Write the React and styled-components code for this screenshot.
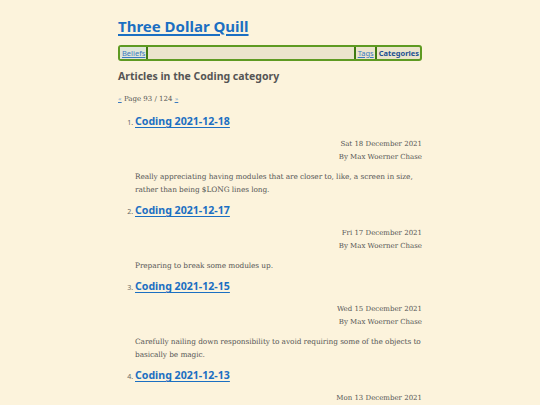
import styled, { createGlobalStyle } from "styled-components"

const Global = createGlobalStyle`
  html, body {
    margin: 0;
    padding: 0;
    background: #fcf3dc;
  }
  body {
    font-family: "DejaVu Serif", "Liberation Serif", serif;
    color: #555;
  }
`

const Page = styled.div`
  width: 304px;
  margin: 0 auto;
  padding-top: 14px;
`

const SiteTitle = styled.a`
  display: block;
  font-family: "Noto Sans", sans-serif;
  font-weight: bold;
  font-size: 15px;
  line-height: 24px;
  color: #1b6fc2;
  text-decoration: underline;
  text-decoration-thickness: 1.5px;
  text-underline-offset: 2px;
`

const Nav = styled.nav`
  margin-top: 7px;
  height: 12px;
  display: flex;
  align-items: stretch;
  border: 2px solid #5e9a22;
  border-radius: 3px;
  background: #ebe4cc;
  font-family: "Noto Sans", sans-serif;
  font-size: 7.5px;
  line-height: 12px;
`

const NavLink = styled.a`
  color: #3a7ac0;
  text-decoration: underline;
  padding: 0 1px 0 2px;
  background: ${(p) => (p.$light ? "#dfe6d8" : "transparent")};
  border-right: 2px solid #3f7a12;
  border-left: ${(p) => (p.$leftBar ? "2px solid #3f7a12" : "none")};
  font-weight: ${(p) => (p.$bold ? "bold" : "normal")};
  ${(p) => p.$bold && "color: #1c4f92; text-decoration: none; border-right: none;"}
`

const Spacer = styled.div`
  flex: 1;
`

const Heading = styled.h2`
  margin: 7px 0 0;
  font-family: "Noto Sans", sans-serif;
  font-size: 10.5px;
  line-height: 16px;
  font-weight: bold;
  color: #555;
`

const Pager = styled.p`
  margin: 9px 0 0;
  font-size: 7px;
  line-height: 12px;
  color: #555;

  a {
    color: #3a7ac0;
    font-size: 6px;
  }
`

const List = styled.ol`
  margin: 8px 0 0;
  padding-left: 17px;
`

const Item = styled.li`
  font-size: 7px;
  margin-bottom: 6px;

  &::marker {
    font-family: "Noto Sans", sans-serif;
    font-size: 7px;
    color: #666;
  }
`

const PostTitle = styled.a`
  font-family: "Noto Sans", sans-serif;
  font-weight: bold;
  font-size: 10.6px;
  line-height: 16px;
  color: #1b6fc2;
  text-decoration: underline;
  text-decoration-thickness: 1.2px;
  text-underline-offset: 1.5px;
`

const Meta = styled.div`
  margin-top: 9px;
  text-align: right;
  font-size: 7px;
  line-height: 13px;
  color: #555;
`

const Summary = styled.p`
  margin: 6px 0 0;
  font-size: 7.4px;
  letter-spacing: -0.09px;
  line-height: 13px;
  color: #555;
`

const posts = [
  {
    title: "Coding 2021-12-18",
    date: "Sat 18 December 2021",
    summary:
      "Really appreciating having modules that are closer to, like, a screen in size, rather than being $LONG lines long.",
  },
  {
    title: "Coding 2021-12-17",
    date: "Fri 17 December 2021",
    summary: "Preparing to break some modules up.",
  },
  {
    title: "Coding 2021-12-15",
    date: "Wed 15 December 2021",
    summary:
      "Carefully nailing down responsibility to avoid requiring some of the objects to basically be magic.",
  },
  {
    title: "Coding 2021-12-13",
    date: "Mon 13 December 2021",
    summary: "Working through the rest of the refactor.",
  },
]

export default function App() {
  return (
    <>
      <Global />
      <Page>
        <SiteTitle href="#">Three Dollar Quill</SiteTitle>
        <Nav>
          <NavLink href="#" $light>Beliefs</NavLink>
          <Spacer />
          <NavLink href="#" $leftBar>Tags</NavLink>
          <NavLink href="#" $bold>Categories</NavLink>
        </Nav>
        <Heading>Articles in the Coding category</Heading>
        <Pager>
          <a href="#">«</a> Page 93 / 124 <a href="#">»</a>
        </Pager>
        <List>
          {posts.map((p) => (
            <Item key={p.title}>
              <PostTitle href="#">{p.title}</PostTitle>
              <Meta>
                {p.date}
                <br />
                By Max Woerner Chase
              </Meta>
              <Summary>{p.summary}</Summary>
            </Item>
          ))}
        </List>
      </Page>
    </>
  )
}
